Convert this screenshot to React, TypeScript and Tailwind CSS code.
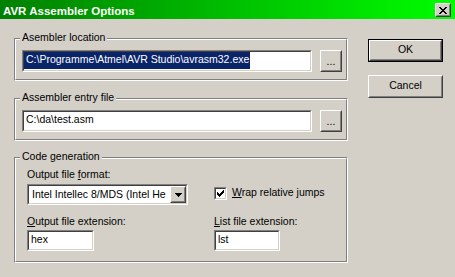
import React from "react";

function Sunken({ className = "", innerClassName = "", children }: { className?: string; innerClassName?: string; children?: React.ReactNode }) {
  return (
    <div className={`border border-t-[#808080] border-l-[#808080] border-r-white border-b-white ${className}`}>
      <div className={`h-full border border-t-[#404040] border-l-[#404040] border-r-[#D4D0C8] border-b-[#D4D0C8] ${innerClassName}`}>
        {children}
      </div>
    </div>
  );
}

function Raised({ className = "", innerClassName = "", children }: { className?: string; innerClassName?: string; children?: React.ReactNode }) {
  return (
    <div className={`border border-t-white border-l-white border-r-[#404040] border-b-[#404040] bg-[#D4D0C8] ${className}`}>
      <div className={`h-full border border-t-[#D4D0C8] border-l-[#D4D0C8] border-r-[#808080] border-b-[#808080] flex items-center justify-center ${innerClassName}`}>
        {children}
      </div>
    </div>
  );
}

function Group({ label, className = "", innerClassName = "", children }: { label: string; className?: string; innerClassName?: string; children?: React.ReactNode }) {
  return (
    <div className={`relative border border-t-[#808080] border-l-[#808080] border-r-white border-b-white ${className}`}>
      <div className={`h-full border border-t-white border-l-white border-r-[#808080] border-b-[#808080] ${innerClassName}`}>
        {children}
      </div>
      <span className="absolute left-[5px] -top-[8px] bg-[#D4D0C8] px-[2px] leading-[13px] whitespace-nowrap">{label}</span>
    </div>
  );
}

function CloseGlyph() {
  const px: [number, number, number][] = [
    [0, 0, 2], [6, 0, 2],
    [1, 1, 2], [5, 1, 2],
    [2, 2, 4],
    [3, 3, 2],
    [2, 4, 4],
    [1, 5, 2], [5, 5, 2],
    [0, 6, 2], [6, 6, 2],
  ];
  return (
    <svg width="8" height="7" viewBox="0 0 8 7" shapeRendering="crispEdges">
      {px.map(([x, y, w], i) => (
        <rect key={i} x={x} y={y} width={w} height={1} fill="#000" />
      ))}
    </svg>
  );
}

function ArrowGlyph() {
  return (
    <svg width="7" height="4" viewBox="0 0 7 4" shapeRendering="crispEdges">
      <rect x={0} y={0} width={7} height={1} fill="#000" />
      <rect x={1} y={1} width={5} height={1} fill="#000" />
      <rect x={2} y={2} width={3} height={1} fill="#000" />
      <rect x={3} y={3} width={1} height={1} fill="#000" />
    </svg>
  );
}

function CheckGlyph() {
  const px: [number, number, number][] = [
    [6, 0, 1],
    [5, 1, 2],
    [0, 2, 1], [4, 2, 3],
    [0, 3, 2], [3, 3, 3],
    [0, 4, 5],
    [1, 5, 3],
    [2, 6, 1],
  ];
  return (
    <svg width="7" height="7" viewBox="0 0 7 7" shapeRendering="crispEdges">
      {px.map(([x, y, w], i) => (
        <rect key={i} x={x} y={y} width={w} height={1} fill="#000" />
      ))}
    </svg>
  );
}

export default function App() {
  return (
    <div className="w-[455px] h-[277px] overflow-hidden bg-[#D4D0C8] text-black text-[10.5px] font-['Liberation_Sans',Arial,sans-serif]">
      {/* Title bar */}
      <div className="h-[19px] flex items-start bg-linear-to-r from-[#008000] to-[#00ff00]">
        <span className="mt-[5px] ml-[3px] text-white font-bold text-[11.5px] leading-[13px] whitespace-nowrap">
          AVR Assembler Options
        </span>
        <Raised className="ml-auto mt-[3px] mr-[4px] w-[16px] h-[14px]">
          <CloseGlyph />
        </Raised>
      </div>

      {/* Body */}
      <div className="flex pl-[14px] pt-[19px]">
        <div className="w-[334px] flex flex-col">
          <Group label="Asembler location" className="h-[43px]" innerClassName="pl-[6px] pt-[10px] flex items-start">
            <Sunken className="w-[290px] h-[22px]" innerClassName="bg-white leading-[15px] overflow-hidden whitespace-nowrap">
              <span className="inline-block h-[17px] align-top bg-[#0A246A] text-white pl-[2px] pr-[1px]">
                C:\Programme\Atmel\AVR Studio\avrasm32.exe
              </span>
            </Sunken>
            <Raised className="ml-[8px] w-[22px] h-[22px]">
              <span className="leading-[13px]">...</span>
            </Raised>
          </Group>

          <Group label="Assembler entry file" className="mt-[17px] h-[43px]" innerClassName="pl-[6px] pt-[10px] flex items-start">
            <Sunken className="w-[290px] h-[22px]" innerClassName="bg-white leading-[15px] pl-[2px] overflow-hidden whitespace-nowrap">
              C:\da\test.asm
            </Sunken>
            <Raised className="ml-[8px] w-[22px] h-[22px]">
              <span className="leading-[13px]">...</span>
            </Raised>
          </Group>

          <Group label="Code generation" className="mt-[16px] h-[106px]" innerClassName="pl-[11px] pt-[9px]">
            <div className="grid grid-cols-[161px_auto] gap-x-[26px] items-start">
              <div className="col-span-2 leading-[13px] whitespace-nowrap">
                Output file <u>f</u>ormat:
              </div>

              <Sunken className="mt-[3px] w-[161px] h-[21px]" innerClassName="bg-white flex items-stretch">
                <div className="flex-1 whitespace-nowrap pl-[3px] leading-[15px] flex items-center">
                  Intel Intellec 8/MDS (Intel He
                </div>
                <Raised className="w-[16px] h-full shrink-0">
                  <ArrowGlyph />
                </Raised>
              </Sunken>

              <div className="mt-[3px] h-[21px] flex items-start">
                <Sunken className="mt-[3px] w-[13px] h-[13px]" innerClassName="bg-white flex items-center justify-center">
                  <CheckGlyph />
                </Sunken>
                <span className="ml-[5px] mt-[2px] leading-[13px] whitespace-nowrap">
                  <u>W</u>rap relative jumps
                </span>
              </div>

              <div className="mt-[10px] leading-[13px] whitespace-nowrap">
                <u>O</u>utput file extension:
              </div>
              <div className="mt-[10px] leading-[13px] whitespace-nowrap">
                <u>L</u>ist file extension:
              </div>

              <Sunken className="mt-[2px] w-[67px] h-[21px]" innerClassName="bg-white leading-[15px] pl-[2px]">
                hex
              </Sunken>
              <Sunken className="mt-[2px] w-[66px] h-[21px]" innerClassName="bg-white leading-[15px] pl-[2px]">
                lst
              </Sunken>
            </div>
          </Group>
        </div>

        <div className="ml-[20px] w-[75px] flex flex-col pt-[1px]">
          <div className="border border-black h-[23px]">
            <Raised className="h-full" innerClassName="pb-[2px]">
              <span className="leading-[13px]">OK</span>
            </Raised>
          </div>
          <Raised className="mt-[13px] h-[23px]" innerClassName="pb-[2px]">
            <span className="leading-[13px]">Cancel</span>
          </Raised>
        </div>
      </div>
    </div>
  );
}
